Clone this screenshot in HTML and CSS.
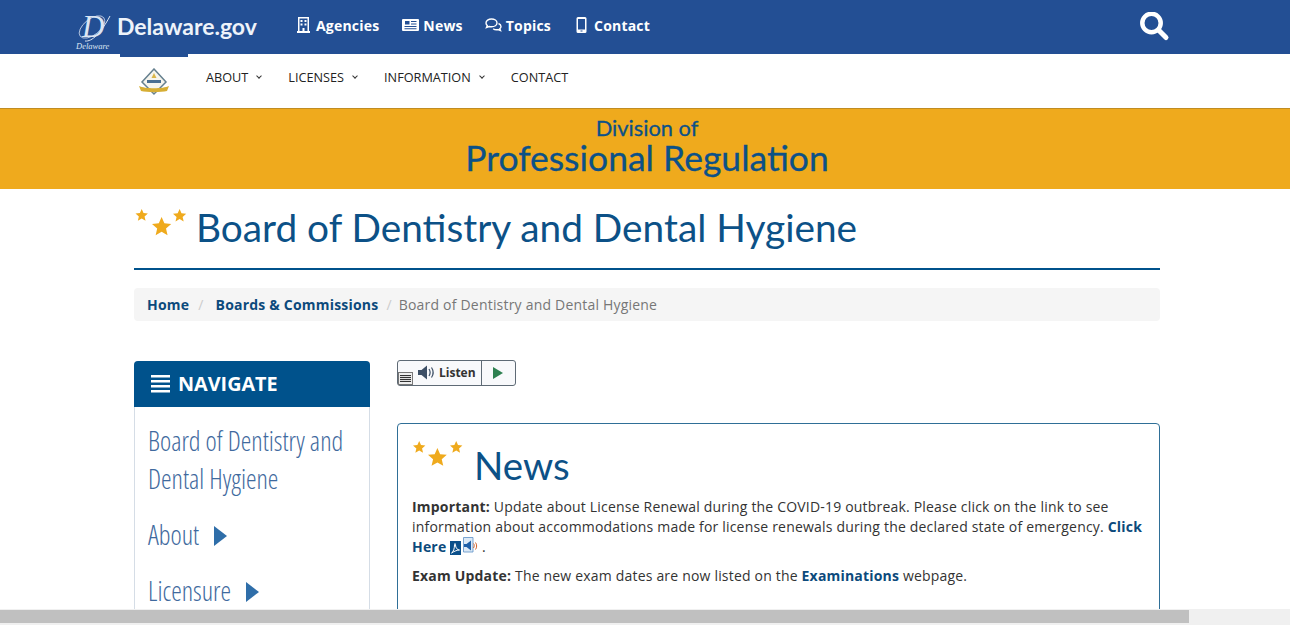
FILE: index.html
```html
<!DOCTYPE html>
<html lang="en">
<head>
    <meta charset="UTF-8">
    <title>Board of Dentistry and Dental Hygiene - Division of Professional Regulation</title>
    <link rel="stylesheet" href="styles.css">
</head>
<body>
    <!-- State of Delaware bar -->
    <header class="state-bar">
        <a class="state-logo">
            <span class="state-seal">
                <svg class="seal-ring" width="36" height="32" viewBox="0 0 36 32">
                    <ellipse cx="15" cy="13" rx="15" ry="8" transform="rotate(-38 15 13)" fill="none" stroke="#c9d6ea" stroke-width=".8"/>
                    <path d="M8 27c7 1 16-8 25-25" fill="none" stroke="#dbe5f3" stroke-width="1"/>
                </svg>
                <span class="seal-letter">D</span>
                <span class="seal-name">Delaware</span>
            </span>
            <span class="state-name">Delaware.gov</span>
        </a>
        <nav class="state-links">
            <a>
                <svg width="13" height="16" viewBox="0 0 13 16">
                    <path fill="#fff" fill-rule="evenodd" d="M1 0h11v14h1v2H0v-2h1zM2.500 1.500v12.500h3v-3h2v3h3V1.500zM3.500 3h2v2h-2zM7.500 3h2v2h-2zM3.500 6.500h2v2h-2zM7.500 6.500h2v2h-2z"/>
                </svg>
                Agencies
            </a>
            <a class="news-link">
                <svg width="17" height="12" viewBox="0 0 17 12">
                    <path fill="#fff" fill-rule="evenodd" d="M1 0h15a1 1 0 0 1 1 1v10a1 1 0 0 1-1 1H1a1 1 0 0 1-1-1V1a1 1 0 0 1 1-1zM3 2v3.500h4.500V2zM9 2v1h5.500V2zM9 4.500v1h5.500v-1zM2.500 7v1h12V7zM2.500 9.200v1h12v-1z"/>
                </svg>
                News
            </a>
            <a class="topics-link">
                <svg width="17" height="14" viewBox="0 0 17 14">
                    <path fill="none" stroke="#fff" stroke-width="1.400" d="M6.500 1C3.500 1 1 2.700 1 5c0 1 .5 1.900 1.300 2.600L1.500 9.500l2.600-1c.7.200 1.500.3 2.400.3 3 0 5.500-1.500 5.500-3.800S9.500 1 6.500 1z"/>
                    <path fill="none" stroke="#fff" stroke-width="1.400" d="M13.500 5.500c1.500.6 2.500 1.700 2.500 3 0 .9-.5 1.700-1.200 2.300l.7 1.800-2.500-1c-1.600.4-3.600.1-4.800-.9"/>
                </svg>
                Topics
            </a>
            <a class="contact-link">
                <svg width="11" height="16" viewBox="0 0 11 16">
                    <path fill="#fff" fill-rule="evenodd" d="M2 0h7a1.500 1.500 0 0 1 1.500 1.500v13A1.500 1.500 0 0 1 9 16H2a1.500 1.500 0 0 1-1.500-1.500v-13A1.500 1.500 0 0 1 2 0zM2 2v10.500h7V2zM4.500 13.400v1.200h2v-1.200z"/>
                </svg>
                Contact
            </a>
        </nav>
        <a class="state-search">
            <svg width="30" height="30" viewBox="0 0 30 30">
                <circle cx="11.500" cy="11" r="9.200" fill="none" stroke="#fff" stroke-width="4.500"/>
                <path d="M18.500 18l7.500 7.500" stroke="#fff" stroke-width="5" stroke-linecap="round"/>
            </svg>
        </a>
    </header>

    <!-- Division menu -->
    <nav class="menu-bar">
        <a class="menu-logo">
            <svg width="32" height="28" viewBox="0 0 32 28">
                <path d="M16 1L28 14 16 26 4 14z" fill="#f6f5ee" stroke="#66808f" stroke-width="1.500"/>
                <path d="M9 12h14v3H9z" fill="#4a6f92"/>
                <path d="M16 5l2.500 5h-5z" fill="#d9b64a"/>
                <path d="M1 18c6 3 24 3 30 0l-2 5c-6 1.500-20 1.500-26 0z" fill="#d6ae34"/>
            </svg>
        </a>
        <a class="menu-item">ABOUT <span class="caret"></span></a>
        <a class="menu-item">LICENSES <span class="caret"></span></a>
        <a class="menu-item">INFORMATION <span class="caret"></span></a>
        <a class="menu-item">CONTACT</a>
    </nav>

    <!-- Division banner -->
    <div class="banner">
        <div class="banner-small">Division of</div>
        <div class="banner-large">Professional Regulation</div>
    </div>

    <div class="container">
        <div class="page-title">
            <svg class="stars" width="54" height="30" viewBox="0 0 54 30">
                <use href="#star" transform="translate(1.500 1) scale(.62)"/>
                <use href="#star" transform="translate(18 9) scale(.96)"/>
                <use href="#star" transform="translate(39 1) scale(.66)"/>
                <defs>
                    <path id="star" fill="#efaa1d" d="M10 0l2.900 6.600 7.100.7-5.400 4.700 1.600 7L10 15.300 3.800 19l1.600-7L0 7.300l7.100-.7z"/>
                </defs>
            </svg>
            <h1>Board of Dentistry and Dental Hygiene</h1>
        </div>

        <ol class="breadcrumb">
            <li><a>Home</a></li>
            <li><a>Boards &amp; Commissions</a></li>
            <li class="current">Board of Dentistry and Dental Hygiene</li>
        </ol>

        <div class="columns">
            <aside class="sidebar">
                <div class="sidebar-head">
                    <svg width="19" height="18" viewBox="0 0 19 18">
                        <path fill="#fff" d="M0 0h19v2.500H0zM0 5h19v2.500H0zM0 10h19v2.500H0zM0 15h19v2.500H0z"/>
                    </svg>
                    NAVIGATE
                </div>
                <div class="sidebar-body">
                    <a class="side-link">Board of Dentistry and Dental Hygiene</a>
                    <a class="side-link">About <span class="side-arrow"></span></a>
                    <a class="side-link">Licensure <span class="side-arrow"></span></a>
                </div>
            </aside>

            <main class="content">
                <div class="listen">
                    <span class="listen-menu"></span>
                    <span class="listen-label">
                        <svg width="18" height="15" viewBox="0 0 18 15">
                            <path fill="#3d4f66" d="M0 5h3.500L9 .5v14L3.500 10H0z"/>
                            <path fill="none" stroke="#3d4f66" stroke-width="1.200" d="M11 4c1.300 2 1.300 5 0 7M13.500 2.500c2 3 2 7 0 10"/>
                        </svg>
                        Listen
                    </span>
                    <span class="listen-play"></span>
                </div>

                <section class="news-box">
                    <div class="news-title">
                        <svg class="stars" width="54" height="30" viewBox="0 0 54 30">
                            <use href="#star" transform="translate(2 3) scale(.62)"/>
                            <use href="#star" transform="translate(17 10) scale(.94)"/>
                            <use href="#star" transform="translate(39 3) scale(.62)"/>
                        </svg>
                        <h2>News</h2>
                    </div>
                    <p><b>Important:</b> Update about License Renewal during the COVID-19 outbreak. Please click on the link to see information about accommodations made for license renewals during the declared state of emergency. <a class="bold-link">Click Here</a>
                        <svg class="file-icon" width="11" height="14" viewBox="0 0 11 14">
                            <path fill="#0b4f8a" d="M0 0h11v14H0z"/>
                            <path fill="none" stroke="#fff" stroke-width="1" d="M1.500 12c2-1 3-5 3-8 0-2 1-2 1 0 0 3 2 5 4 5-2 0-5 1-8 3z"/>
                        </svg><svg class="audio-icon" width="15" height="16" viewBox="0 0 15 16">
                            <path fill="#dce9f6" stroke="#5a8fc6" stroke-width=".8" d="M.5.500h9.500v14.500H.5z"/>
                            <path fill="#1e5fa8" d="M1 7h2.500L8 3.500v10L3.500 10H1z"/>
                            <path fill="none" stroke="#d4622a" stroke-width="1" d="M10.500 6.500c1 1 1 3 0 4.500M12.500 5.500c1.500 2 1.500 5 0 7"/>
                        </svg> .
                    </p>
                    <p><b>Exam Update:</b> The new exam dates are now listed on the <a class="bold-link">Examinations</a> webpage.</p>
                </section>
            </main>
        </div>
    </div>

    <!-- Horizontal scrollbar of the window -->
    <div class="scrollbar"><div class="scrollbar-thumb"></div></div>
</body>
</html>
```

FILE: styles.css
```css
* {
    box-sizing: border-box;
}

html, body {
    height: 625px;
    margin: 0;
    overflow: hidden;
}

body {
    background: #fff;
    color: #333;
    font-family: "Open Sans", sans-serif;
    font-size: 14px;
}

/* Top state bar */
.state-bar {
    display: flex;
    align-items: center;
    height: 54px;
    padding-left: 76px;
    background-color: #234f94;
    color: #fff;
}

.state-logo {
    display: flex;
    align-items: center;
    width: 221px;
}

.state-seal {
    position: relative;
    display: block;
    width: 35px;
    height: 36px;
    margin-right: 6px;
    margin-top: 9px;
}

.seal-ring {
    position: absolute;
    top: 0;
    left: 1px;
}

.seal-letter {
    position: absolute;
    top: -1px;
    left: 6px;
    font-family: "Liberation Serif", serif;
    font-style: italic;
    font-size: 31px;
    line-height: 28px;
    color: #dbe5f3;
}

.seal-name {
    position: absolute;
    bottom: -1px;
    left: 0;
    font-family: "Liberation Serif", serif;
    font-style: italic;
    font-size: 8.500px;
    line-height: 9px;
    color: #dbe5f3;
}

.state-name {
    margin-bottom: 3px;
    font-family: "Lato", sans-serif;
    font-weight: 700;
    font-size: 23px;
    color: #eef3fa;
}

.state-links {
    display: flex;
    gap: 22px;
    margin-bottom: 4px;
}

.state-links a {
    display: flex;
    align-items: center;
    gap: 6px;
    font-weight: 700;
    font-size: 14px;
    letter-spacing: .2px;
    color: #fff;
}

.state-links .news-link {
    gap: 4px;
    margin-left: 1px;
}

.state-links .topics-link {
    gap: 4px;
}

.state-links .contact-link {
    gap: 7px;
    margin-left: 3px;
}

.state-search {
    display: flex;
    margin-left: auto;
    margin-right: 120px;
}

/* Division menu */
.menu-bar {
    display: flex;
    align-items: center;
    height: 54px;
    padding: 0 0 8px 120px;
    background: #fff;
}

.menu-logo {
    display: flex;
    align-items: center;
    justify-content: center;
    align-self: flex-start;
    width: 68px;
    height: 49px;
    padding-top: 3px;
    border-top: 3px solid #234f94;
    margin-right: 18px;
}

.menu-item {
    display: flex;
    align-items: center;
    font-size: 12.700px;
    color: #222;
    margin-right: 27px;
}

.caret {
    display: inline-block;
    width: 4px;
    height: 4px;
    margin-left: 9px;
    margin-bottom: 3px;
    border-right: 1.500px solid #333;
    border-bottom: 1.500px solid #333;
    transform: rotate(45deg);
}

/* Orange banner */
.banner {
    height: 81px;
    padding-top: 6px;
    padding-left: 4px;
    background-color: #efaa1d;
    border-top: 1px solid #c08c22;
    color: #0c5187;
    text-align: center;
    font-family: "Lato", sans-serif;
    -webkit-text-stroke: .3px #0c5187;
}

.banner-small {
    font-size: 21.800px;
    line-height: 26px;
}

.banner-large {
    font-size: 35.500px;
    line-height: 33px;
}

/* Main container */
.container {
    width: 1026px;
    margin-left: 134px;
}

.page-title {
    display: flex;
    align-items: flex-start;
    height: 81px;
    padding-top: 19px;
    border-bottom: 2px solid #00528c;
    margin-bottom: 18px;
}

.stars {
    flex: none;
    margin-right: 8px;
}

h1 {
    margin: 0;
    font-family: "Lato", sans-serif;
    font-weight: 400;
    font-size: 38.800px;
    line-height: 38px;
    color: #0c5187;
}

.breadcrumb {
    display: flex;
    height: 33px;
    align-items: center;
    margin: 0 0 39px;
    padding: 0 13px;
    list-style: none;
    background: #f5f5f5;
    border-radius: 4px;
    letter-spacing: .2px;
}

.breadcrumb li + li::before {
    content: "/";
    color: #ccc;
    padding: 0 12px 0 9px;
}

.breadcrumb .current::before {
    padding: 0 7px 0 8px;
}

.breadcrumb a {
    font-weight: 700;
    color: #0c4a7c;
}

.breadcrumb .current {
    color: #777;
}

.columns {
    display: flex;
    gap: 27px;
}

/* Sidebar */
.sidebar {
    flex: none;
    width: 236px;
    height: 300px;
    margin-top: 1px;
    border: 1px solid #d5dde6;
    border-radius: 4px;
}

.sidebar-head {
    display: flex;
    align-items: center;
    gap: 8px;
    height: 46px;
    margin: -1px -1px 0;
    padding: 0 0 1px 17px;
    background-color: #00528c;
    color: #fff;
    font-weight: 700;
    font-size: 19.800px;
    border-radius: 4px 4px 0 0;
}

.sidebar-body {
    padding: 15px 13px;
}

.side-link {
    display: block;
    margin-bottom: 18px;
    font-weight: 300;
    font-stretch: 75%;
    font-size: 26.700px;
    line-height: 38px;
    color: #3f6a9e;
}

.side-arrow {
    display: inline-block;
    margin-left: 10px;
    border-left: 13px solid #2f6ea9;
    border-top: 10px solid transparent;
    border-bottom: 10px solid transparent;
    vertical-align: -1px;
}

/* Main column */
.content {
    flex: 1;
}

.listen {
    position: relative;
    display: flex;
    width: 119px;
    height: 26px;
    margin-bottom: 37px;
    border: 1px solid #5e6a75;
    border-radius: 3px;
    background: #f8f9fb;
}

.listen-menu {
    position: absolute;
    left: 0;
    bottom: 0;
    width: 15px;
    height: 13px;
    padding: 2px 1px;
    border: 1px solid #777;
    background: repeating-linear-gradient(#333 0 1px, #ddd 1px 2px) content-box, #eee;
}

.listen-label {
    display: flex;
    align-items: center;
    gap: 3px;
    width: 84px;
    padding: 0 0 2px 20px;
    font-size: 12px;
    font-weight: 700;
    border-right: 1px solid #5e6a75;
}

.listen-play {
    width: 0;
    height: 0;
    margin: 6px 0 0 11px;
    border-left: 10px solid #2e8050;
    border-top: 6px solid transparent;
    border-bottom: 6px solid transparent;
}

.news-box {
    height: 300px;
    padding: 14px 14px;
    border: 1px solid #2f6f97;
    border-radius: 4px;
}

.news-title {
    display: flex;
    align-items: flex-start;
    height: 59px;
    margin-left: -1px;
}

.news-title .stars {
    margin-right: 9px;
}

h2 {
    margin: 0;
    font-family: "Lato", sans-serif;
    font-weight: 400;
    font-size: 38.500px;
    line-height: 54px;
    color: #0c5187;
}

.news-box p {
    margin: 0 0 9px;
    font-size: 14px;
    line-height: 20px;
    letter-spacing: .19px;
}

.bold-link {
    font-weight: 700;
    color: #0c4a7c;
}

.file-icon {
    vertical-align: -3px;
    margin: -4px 2px 0 0;
}

.audio-icon {
    vertical-align: -1px;
    margin-top: -6px;
}

/* Horizontal scrollbar */
.scrollbar {
    position: fixed;
    left: 0;
    right: 0;
    bottom: 0;
    height: 16px;
    padding: 1px 0;
    background: #f0f0f0;
}

.scrollbar-thumb {
    width: 1189px;
    height: 13px;
    background: #c0c0c0;
}
```
